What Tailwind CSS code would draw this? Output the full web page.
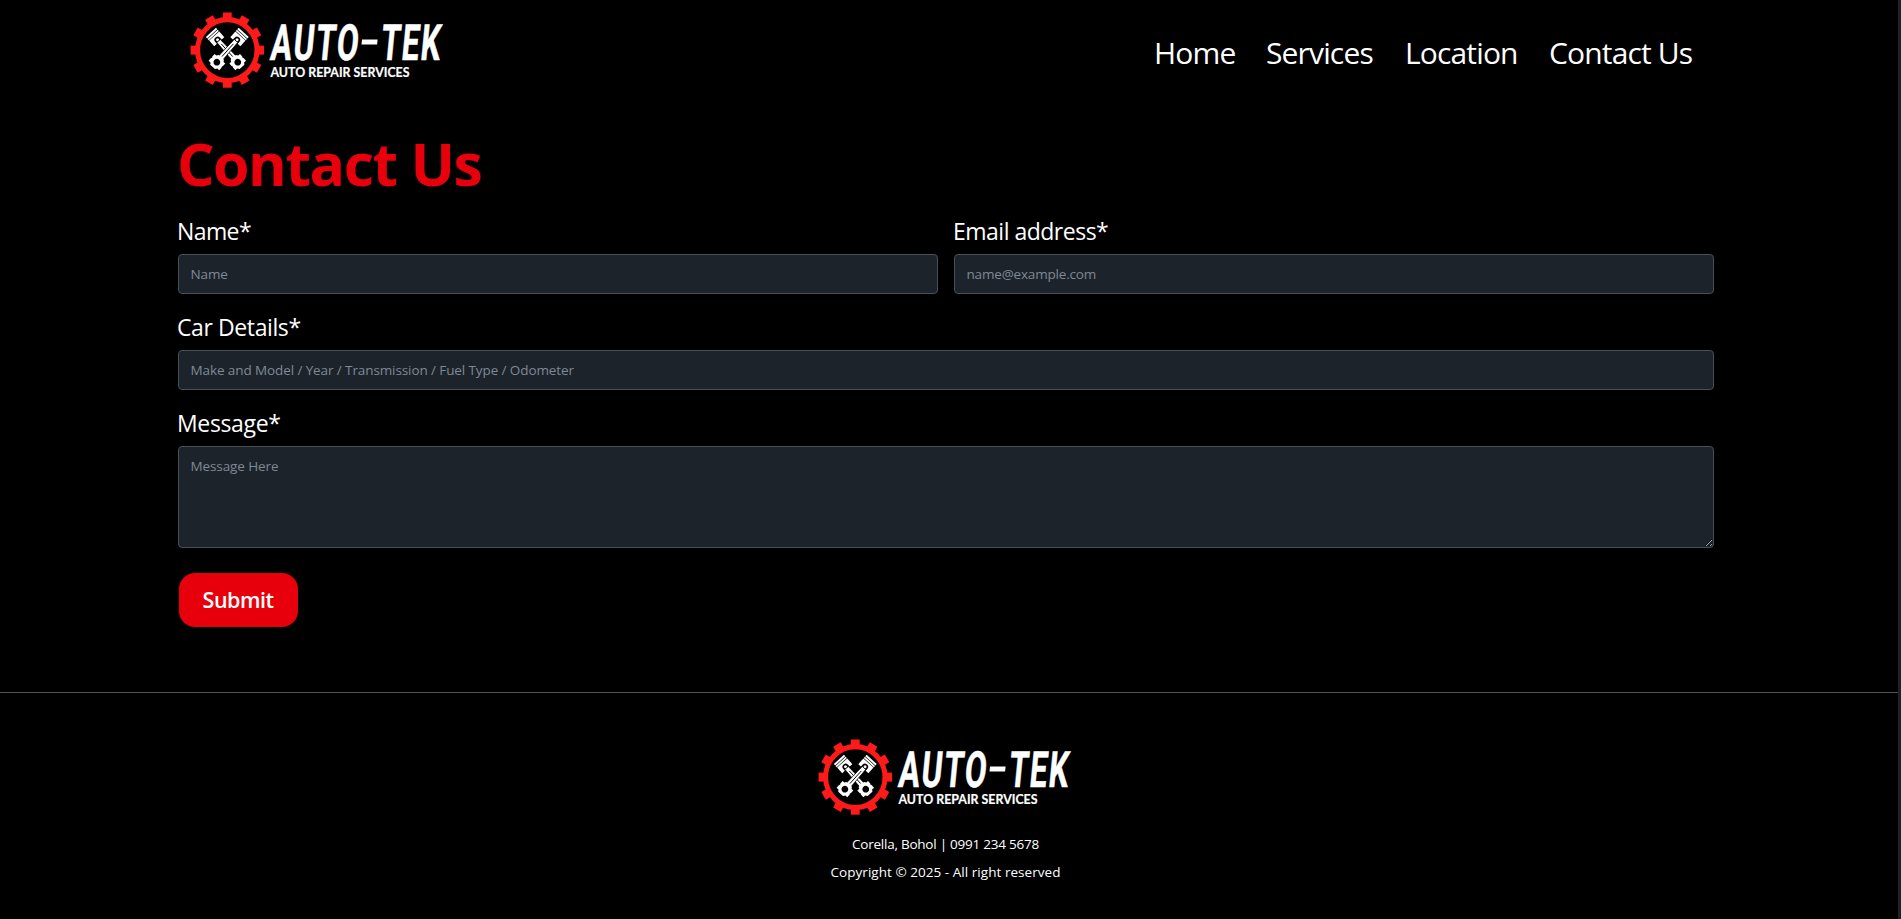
<!DOCTYPE html>
<html lang="en">
<head>
<meta charset="utf-8">
<title>Auto-Tek | Contact Us</title>
<script src="https://cdn.jsdelivr.net/npm/@tailwindcss/browser@4"></script>
</head>
<body class="flex h-screen overflow-hidden bg-[#1d232a] text-white font-['Open_Sans','Noto_Sans',sans-serif]">

<svg class="hidden">
  <defs>
    <g id="piston">
      <path fill="#fff" d="M-6.8-24.5h13.6v2h-13.6zM-6.8-21.9h13.6v1.7h-13.6zM-6.8-19.6h13.6v7.6h-3.6v-2.4a3.2 3.2 0 0 0-6.4 0v2.4h-3.6z"/>
      <circle cy="-14.6" r="1.5" fill="#fff"/>
      <path fill="#fff" stroke="#000" stroke-width=".7" d="M-2.3-13h4.6L3 12h-6z"/>
      <path stroke="#000" stroke-width=".9" d="M0-9V8"/>
      <path fill="#fff" fill-rule="evenodd" d="M-3.6 9h7.2l1.2 2h2.4v3.4l-.7 1 .7 1v3.6h-2.6l-1.4 2h-6.4l-1.4-2h-2.6v-3.6l.7-1-.7-1v-3.4h2.4zM0 12.2a3.4 3.4 0 1 0 .01 0z"/>
    </g>
    <g id="logo">
      <g transform="translate(47.3 50.1)">
        <g transform="scale(1 1.025)">
          <circle r="29.7" fill="none" stroke="#ff1a1a" stroke-width="5"/>
          <g fill="#ff1a1a">
            <path id="tooth" d="M-4.4-36.7h8.8v6h-8.8z"/>
            <use href="#tooth" transform="rotate(30)"/><use href="#tooth" transform="rotate(60)"/>
            <use href="#tooth" transform="rotate(90)"/><use href="#tooth" transform="rotate(120)"/>
            <use href="#tooth" transform="rotate(150)"/><use href="#tooth" transform="rotate(180)"/>
            <use href="#tooth" transform="rotate(210)"/><use href="#tooth" transform="rotate(240)"/>
            <use href="#tooth" transform="rotate(270)"/><use href="#tooth" transform="rotate(300)"/>
            <use href="#tooth" transform="rotate(330)"/>
          </g>
        </g>
        <use href="#piston" transform="translate(0 .5) rotate(-42)"/>
        <use href="#piston" transform="translate(0 .5) rotate(42)"/>
      </g>
      <g fill="#fff" stroke="#fff" stroke-width=".6" font-family="Roboto, sans-serif" font-weight="700" font-size="50">
        <text transform="translate(89.6 60) skewX(-5.5) scale(.63 1)" textLength="144" letter-spacing="5">AUTO</text>
        <text transform="translate(199.8 60) skewX(-5.5) scale(.62 1)" textLength="101" letter-spacing="5">TEK</text>
        <path stroke="none" d="M182 39.6h15.6l-.5 5h-15.6z"/>
      </g>
      <text x="90.5" y="77" fill="#fff" stroke="#fff" stroke-width=".2" font-family="Lato, sans-serif" font-weight="700" font-size="13" textLength="139" lengthAdjust="spacingAndGlyphs">AUTO REPAIR SERVICES</text>
    </g>
  </defs>
</svg>

<div class="h-full w-[1898px] shrink-0 bg-black">
  <header class="ml-[178px] flex h-[132px] w-[1536px] justify-between">
    <svg class="ml-0.5 h-[100px] w-[270px]"><use href="#logo"/></svg>
    <nav class="flex pt-[33px] text-[30px] leading-10 tracking-[-0.85px] whitespace-nowrap">
      <a class="w-[112px]">Home</a>
      <a class="w-[139px]">Services</a>
      <a class="w-[144px]">Location</a>
      <a class="w-[165px]">Contact Us</a>
    </nav>
  </header>

  <main class="ml-[178px] h-[560px] w-[1536px]">
    <h1 class="-ml-px pt-px text-[59px] leading-[60px] font-bold tracking-[-1.5px] text-[#e7000b]">Contact Us</h1>
    <form class="-ml-px flex w-[1537px] flex-col pt-[22px]">
      <div class="grid grid-cols-2 gap-[15px]">
        <label class="flex flex-col gap-[7px] text-[23px] leading-8 tracking-[-0.6px]">Name*
          <input class="ml-px h-10 rounded border border-[#464e57] bg-[#1d232a] px-[11.5px] text-[13.5px] tracking-[-0.1px] placeholder:text-[#7f8994]" placeholder="Name">
        </label>
        <label class="flex flex-col gap-[7px] text-[23px] leading-8 tracking-[-0.5px]">Email address*
          <input class="ml-px h-10 rounded border border-[#464e57] bg-[#1d232a] px-[11.5px] text-[13.5px] tracking-[-0.18px] placeholder:text-[#7f8994]" placeholder="name@example.com">
        </label>
      </div>
      <label class="mt-[17px] flex flex-col gap-[7px] text-[23px] leading-8 tracking-[-0.4px]">Car Details*
        <input class="ml-px h-10 rounded border border-[#464e57] bg-[#1d232a] px-[11.5px] text-[13.5px] tracking-[-0.1px] placeholder:text-[#7f8994]" placeholder="Make and Model / Year / Transmission / Fuel Type / Odometer">
      </label>
      <label class="mt-[17px] flex flex-col gap-[7px] text-[23px] leading-8 tracking-[-0.35px]">Message*
        <textarea class="ml-px h-[102px] rounded border border-[#464e57] bg-[#1d232a] px-[11.5px] py-[9px] text-[13.5px] leading-5 tracking-[-0.1px] placeholder:text-[#7f8994]" placeholder="Message Here"></textarea>
      </label>
      <button type="button" class="mt-[25px] ml-[1.5px] h-[54px] w-[119px] rounded-2xl bg-[#e7000b] text-[21.5px] font-semibold tracking-[-0.5px]">Submit</button>
    </form>
  </main>

  <footer class="flex flex-col border-t border-[#5a534c] pt-[34px] text-[13.5px] leading-5">
    <svg class="ml-[808px] h-[100px] w-[270px]"><use href="#logo"/></svg>
    <div class="ml-[177.5px] flex w-[1536px] flex-col items-center gap-2 pt-[7px]">
      <p class="tracking-[-0.24px]">Corella, Bohol | 0991 234 5678</p>
      <p class="tracking-[0.04px]">Copyright © 2025 - All right reserved</p>
    </div>
  </footer>
</div>
</body>
</html>
